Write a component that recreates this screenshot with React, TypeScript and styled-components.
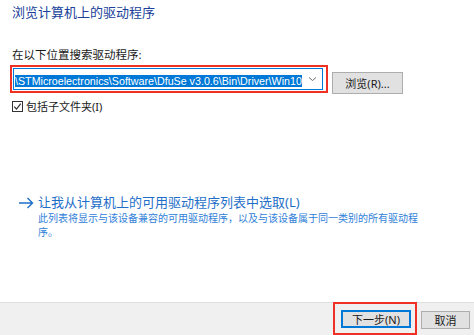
import React from 'react';
import styled, { createGlobalStyle } from 'styled-components';

const FONT = `"Noto Sans", "Noto Sans CJK SC", sans-serif`;
const PATH_FONT = `"Liberation Sans", "Noto Sans CJK SC", sans-serif`;
const ACCENT = '#0078d7';
const MARK = '#ee3124';

const GlobalStyle = createGlobalStyle`
  html, body {
    margin: 0;
    padding: 0;
    background: #ffffff;
  }
  body {
    font-family: ${FONT};
    color: #1a1a1a;
  }
`;

function Chevron() {
  return (
    <svg width="9" height="6" viewBox="0 0 9 6">
      <path d="M1 1.5 L4.5 4.5 L8 1.5" fill="none" stroke="#6e6e6e" strokeWidth="1" />
    </svg>
  );
}

function Arrow() {
  return (
    <svg width="16" height="12" viewBox="0 0 16 12">
      <path d="M1 6 H14.5 M9.5 1 L14.5 6 L9.5 11" fill="none" stroke="#1f6fc8" strokeWidth="1.4" />
    </svg>
  );
}

function CheckMark() {
  return (
    <svg width="9" height="9" viewBox="0 0 9 9">
      <path d="M1.2 4.6 L3.5 7 L7.8 1.6" fill="none" stroke="#333" strokeWidth="1.2" />
    </svg>
  );
}

export default function App() {
  return (
    <>
      <GlobalStyle />
      <Page>
        <Content>
          <Title>浏览计算机上的驱动程序</Title>
          <Label>在以下位置搜索驱动程序:</Label>
          <PathRow>
            <Highlight>
              <Combo>
                <ComboField>
                  <ComboValue>\STMicroelectronics\Software\DfuSe v3.0.6\Bin\Driver\Win10</ComboValue>
                </ComboField>
                <ComboArrow>
                  <Chevron />
                </ComboArrow>
              </Combo>
            </Highlight>
            <Button $width={71} $height={22}>浏览(R)...</Button>
          </PathRow>
          <CheckRow>
            <CheckBox>
              <CheckMark />
            </CheckBox>
            <span>包括子文件夹(I)</span>
          </CheckRow>
          <Choice>
            <ChoiceHead>
              <Arrow />
              <ChoiceTitle>让我从计算机上的可用驱动程序列表中选取(L)</ChoiceTitle>
            </ChoiceHead>
            <ChoiceText>
              此列表将显示与该设备兼容的可用驱动程序，以及与该设备属于同一类别的所有驱动程序。
            </ChoiceText>
          </Choice>
        </Content>
        <Footer>
          <FooterHighlight>
            <Button $width={70} $height={18} $focused>下一步(N)</Button>
          </FooterHighlight>
          <Button $width={49} $height={18}>取消</Button>
        </Footer>
      </Page>
    </>
  );
}

const Page = styled.div`
  width: 474px;
  height: 335px;
  display: flex;
  flex-direction: column;
  overflow: hidden;
`;

const Content = styled.div`
  flex: 1;
  padding: 4px 0 0 12px;
`;

const Title = styled.h1`
  margin: 0;
  font-size: 13px;
  line-height: 17px;
  font-weight: 400;
  color: #203f9a;
`;

const Label = styled.div`
  margin-top: 26px;
  font-size: 11.5px;
  line-height: 16px;
`;

const PathRow = styled.div`
  display: flex;
  align-items: flex-end;
  gap: 4px;
  margin-top: 2px;
  margin-left: -2px;
`;

const Highlight = styled.div`
  border: 2px solid ${MARK};
  padding: 1px 3px 1px 1px;
`;

const Combo = styled.div`
  box-sizing: border-box;
  width: 310px;
  height: 22px;
  border: 1px solid ${ACCENT};
  display: flex;
  align-items: center;
  padding-left: 1px;
  background: #fff;
  overflow: hidden;
`;

const ComboField = styled.span`
  flex: 1;
  min-width: 0;
  overflow: hidden;
  white-space: nowrap;
`;

const ComboValue = styled.span`
  font-family: ${PATH_FONT};
  font-size: 10.7px;
  line-height: 15px;
  color: #fff;
  background: ${ACCENT};
`;

const ComboArrow = styled.span`
  width: 14px;
  display: flex;
  justify-content: center;
  align-items: center;
  margin-right: 3px;
`;

const Button = styled.button<{ $width: number; $height: number; $focused?: boolean }>`
  box-sizing: border-box;
  width: ${(p) => p.$width}px;
  height: ${(p) => p.$height}px;
  margin: 0 0 -1px 0;
  padding: 0;
  font-family: ${FONT};
  font-size: 11px;
  color: #1a1a1a;
  background: #e1e1e1;
  border: 1px solid ${(p) => (p.$focused ? ACCENT : '#adadad')};
  box-shadow: ${(p) => (p.$focused ? `inset 0 0 0 1px ${ACCENT}` : 'none')};
`;

const CheckRow = styled.div`
  display: flex;
  align-items: center;
  gap: 3px;
  margin-top: 6px;
  font-size: 11px;
  line-height: 15px;
`;

const CheckBox = styled.span`
  box-sizing: border-box;
  width: 11px;
  height: 11px;
  border: 1px solid #333;
  display: flex;
  align-items: center;
  justify-content: center;
`;

const Choice = styled.div`
  margin-top: 80px;
  padding-left: 6px;
`;

const ChoiceHead = styled.div`
  display: flex;
  align-items: center;
  gap: 4px;
`;

const ChoiceTitle = styled.span`
  font-size: 13px;
  line-height: 17px;
  color: #1f6fc8;
`;

const ChoiceText = styled.p`
  margin: 0 0 0 20px;
  width: 384px;
  font-size: 10px;
  line-height: 14px;
  color: #2f80d8;
`;

const Footer = styled.div`
  height: 32px;
  border-top: 1px solid #dfdfdf;
  background: #f0f0f0;
  display: flex;
  justify-content: flex-end;
  align-items: center;
  gap: 4px;
  padding-right: 4px;
`;

const FooterHighlight = styled.div`
  align-self: stretch;
  margin-top: -1px;
  border: 2px solid ${MARK};
  padding: 0 4px 0 6px;
  display: flex;
  align-items: center;
`;
